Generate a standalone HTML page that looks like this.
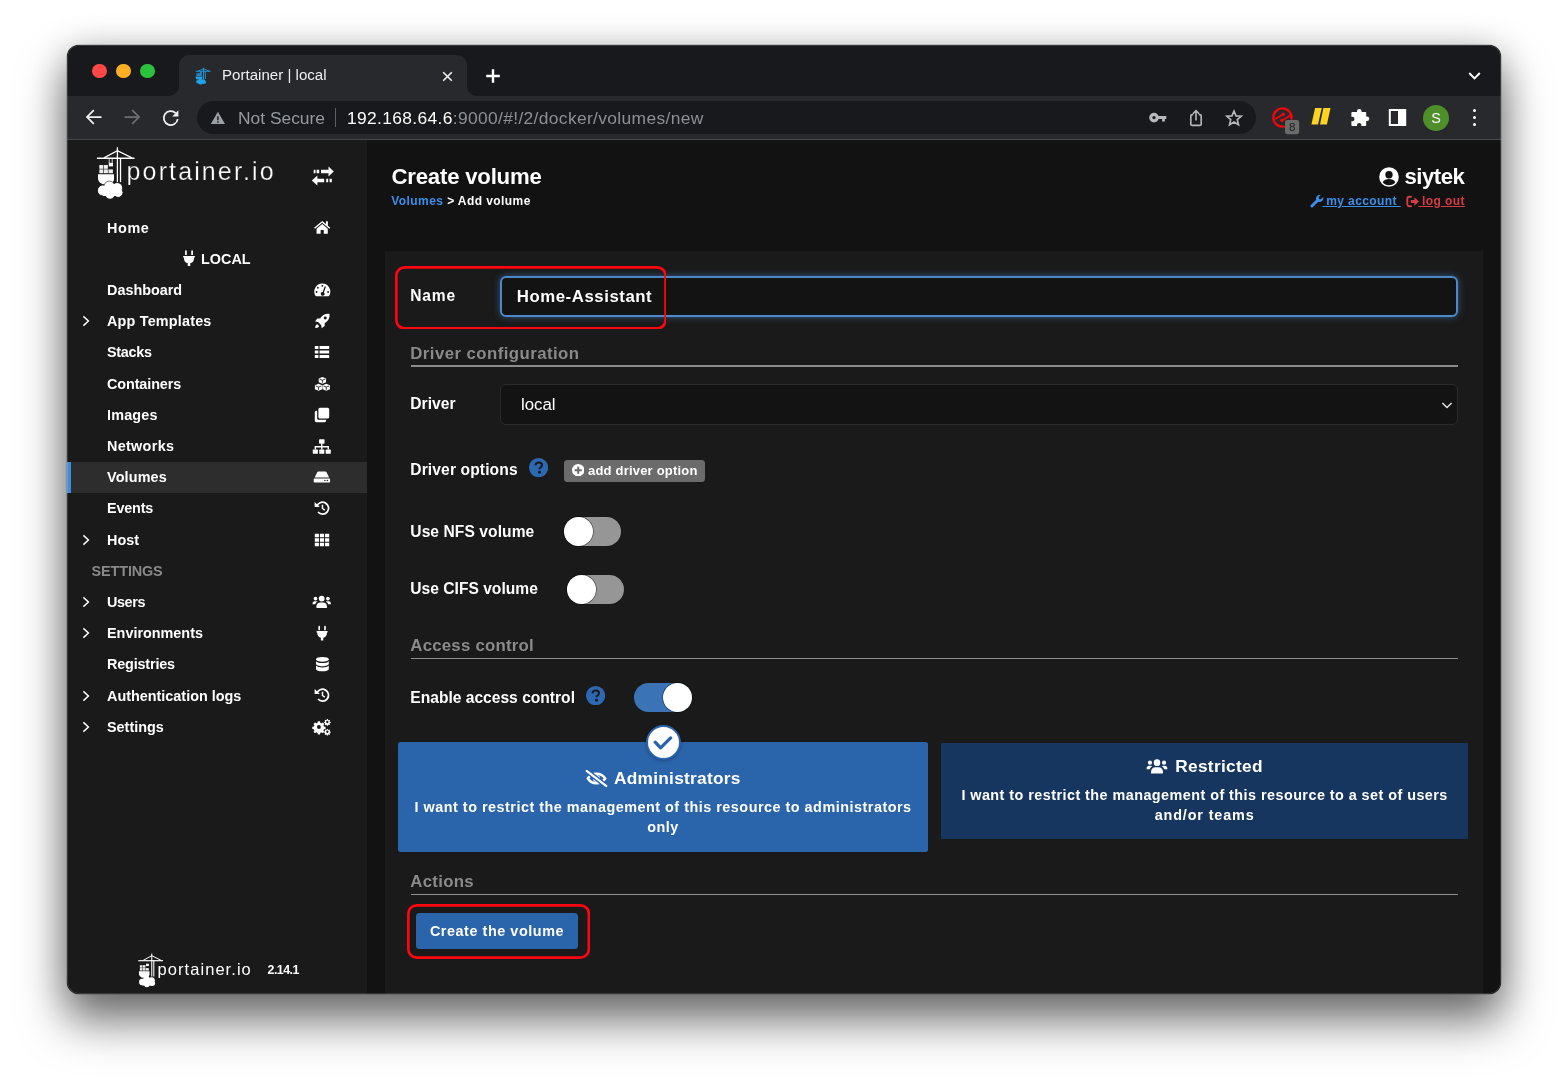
<!DOCTYPE html>
<html lang="en">
<head>
<meta charset="utf-8">
<title>Portainer | local</title>
<style>
html,body{margin:0;padding:0}
body{width:1568px;height:1082px;background:#fff;position:relative;overflow:hidden;font-family:"Liberation Sans",sans-serif;color:#fff}
#win{position:absolute;left:67px;top:45px;width:1434px;height:948.5px;border-radius:12px;background:#121212;overflow:hidden;
 box-shadow:0 0 0 .5px rgba(0,0,0,.3),0 26px 45px 2px rgba(0,0,0,.52),0 4px 36px rgba(0,0,0,.2)}
#win::after{content:"";position:absolute;left:0;top:0;right:0;bottom:0;border-radius:12px;border:1px solid rgba(255,255,255,.14);pointer-events:none}
#pg{position:absolute;left:-67px;top:-45px;width:1568px;height:1082px;will-change:transform}
#pg *{position:absolute;box-sizing:border-box;margin:0;padding:0;white-space:nowrap}
#pg svg *{position:static}
.t{font-weight:700;line-height:1;color:#fff}
/* chrome */
#tabstrip{left:67px;top:45px;width:1434px;height:51px;background:#18191c}
#tab{left:179px;top:55px;width:288px;height:41px;background:#28292d;border-radius:10px 10px 0 0}
#toolbar{left:67px;top:96px;width:1434px;height:44px;background:#28292d;border-bottom:1px solid #47484b}
#omni{left:197px;top:101px;width:1059px;height:33px;border-radius:17px;background:#18191c}
.sf{font-family:"Liberation Sans",sans-serif;font-weight:400;line-height:1}
/* page */
#sidebar{left:67px;top:140px;width:300px;height:854px;background:#1a1a1a}
#main{left:367px;top:140px;width:1134px;height:854px;background:#121212}
#widget{left:385px;top:251px;width:1098px;height:743px;background:#1a1a1a}
.nav{left:107px;font-size:14.4px;font-weight:700;line-height:1;color:#fff}
.sec{left:410.3px;font-size:16.8px;color:#8c8c8c;font-weight:700;line-height:1}
.hr{left:410.5px;width:1047.3px;height:1.4px;background:#8c8c8c}
.lbl{left:410.3px;font-size:15.6px;font-weight:700;line-height:1}
.tg{width:57.6px;height:28.8px;border-radius:15px;background:#969696}
.tg i{top:-.2px;left:0;width:29.2px;height:29.2px;border-radius:50%;background:#fff;box-shadow:0 0 0 .7px rgba(0,0,0,.5)}
.redbox{border:2.8px solid #fa0812;border-radius:10px}
</style>
</head>
<body>
<div id="win"><div id="pg">
<!-- CHROME -->
<div id="tabstrip"></div>
<div id="tab"></div>
<div id="toolbar"></div>
<div id="omni"></div>
<!--CHROME-START-->
<!-- traffic lights -->
<div style="left:92.400px;top:64.100px;width:14.400px;height:14.400px;border-radius:50%;background:#fd4848"></div>
<div style="left:116.300px;top:64.100px;width:14.400px;height:14.400px;border-radius:50%;background:#fbb024"></div>
<div style="left:140.200px;top:64.100px;width:14.400px;height:14.400px;border-radius:50%;background:#2bc23c"></div>
<!-- tab curves -->
<svg style="left:169px;top:86px" width="10" height="10" viewBox="0 0 10 10"><path d="M10 0V10H0A10 10 0 0 0 10 0Z" fill="#28292d"/></svg>
<svg style="left:467px;top:86px" width="10" height="10" viewBox="0 0 10 10"><path d="M0 0V10H10A10 10 0 0 1 0 0Z" fill="#28292d"/></svg>
<!-- favicon -->
<svg style="left:194.600px;top:66.600px" width="16" height="18" viewBox="95 145 42 56" preserveAspectRatio="none" fill="#1fa2e8" stroke="none">
 <g stroke="#1fa2e8" fill="none"><path d="M117.400 147.300V182.200M122 158V182.200" stroke-width="2.600"/><path d="M96.900 158.200H135.500" stroke-width="2.600"/><path d="M103 157.900L117.400 150.600L133 157.900" stroke-width="2.200"/></g>
 <rect x="107.500" y="160" width="5.500" height="6" opacity=".8"/><rect x="98.500" y="164.500" width="14.500" height="9" opacity=".75"/>
 <path d="M97 174.200H114.500V179c0 3-2.800 5.200-6 5.200h-5c-3.600 0-6.500-2.600-6.500-6z"/>
 <circle cx="103" cy="190.500" r="5.200"/><circle cx="109.400" cy="186.600" r="5.400"/><circle cx="117.200" cy="188" r="5.200"/><circle cx="119.200" cy="192.600" r="4.800"/><circle cx="110" cy="194.400" r="4.800"/><rect x="103" y="187" width="16" height="10"/>
</svg>
<div class="sf" style="left:222px;top:65.200px;font-size:15.100px;line-height:20px;color:#eceef0">Portainer | local</div>
<svg style="left:441px;top:69.5px" width="13" height="13" viewBox="0 0 13 13"><path d="M2.2 2.2L10.8 10.8M10.8 2.2L2.2 10.8" stroke="#f1f1f1" stroke-width="1.6" fill="none"/></svg>
<svg style="left:485px;top:68px" width="16" height="16" viewBox="0 0 16 16"><path d="M8 1.2V14.8M1.2 8H14.8" stroke="#fff" stroke-width="2.4" fill="none"/></svg>
<svg style="left:1467px;top:70px" width="15" height="12" viewBox="0 0 15 12"><path d="M2.2 3L7.5 8.4L12.8 3" stroke="#fff" stroke-width="2" fill="none"/></svg>
<!-- nav buttons -->
<svg style="left:84px;top:107px" width="20" height="20" viewBox="0 0 20 20"><path d="M17.5 10H3.2M9.8 3.2L3 10L9.8 16.8" stroke="#f1f1f1" stroke-width="1.750" fill="none"/></svg>
<svg style="left:121.5px;top:107px" width="20" height="20" viewBox="0 0 20 20"><path d="M2.5 10H16.8M10.2 3.2L17 10L10.2 16.8" stroke="#6c6e72" stroke-width="1.750" fill="none"/></svg>
<svg style="left:160.500px;top:108px" width="20" height="20" viewBox="0 0 20 20"><path d="M16.700 11A7 7 0 1 1 14.700 5.100" stroke="#f1f1f1" stroke-width="1.750" fill="none"/><path d="M17.400 2.200V8.400H11.200z" fill="#f1f1f1"/></svg>
<!-- omnibox content -->
<svg style="left:210.100px;top:110.600px" width="15.800" height="13.800" viewBox="0 0 17 15"><path d="M8.5 0.8L16.4 14.4H0.6z" fill="#9aa0a6"/><path d="M8.5 5.6V10M8.5 11.2V12.8" stroke="#18191c" stroke-width="1.6"/></svg>
<div class="sf" style="left:238px;top:106px;font-size:17.4px;line-height:24px;color:#959a9f">Not Secure</div>
<div style="left:335px;top:108px;width:1.2px;height:19px;background:#5c5f63"></div>
<div class="sf" style="left:347px;top:106px;font-size:17.4px;line-height:24px;color:#8c9095;letter-spacing:.35px"><span style="position:static;color:#fff">192.168.64.6</span>:9000/#!/2/docker/volumes/new</div>
<!-- key -->
<svg style="left:1147.800px;top:108px" width="20" height="20" viewBox="0 0 20 20"><circle cx="6" cy="9.600" r="3.250" fill="none" stroke="#b6b8bb" stroke-width="3.150"/><path d="M9.600 8.100H18.300V11.100H16.900V13.600H14.100V11.100H9.600z" fill="#b6b8bb"/></svg>
<!-- share -->
<svg style="left:1186px;top:105.800px" width="20" height="22" viewBox="0 0 20 22"><path d="M7.200 8.600H6.200a1.400 1.400 0 0 0-1.400 1.400v8a1.400 1.400 0 0 0 1.400 1.400h7.600a1.400 1.400 0 0 0 1.400-1.400v-8a1.400 1.400 0 0 0-1.400-1.400H12.800" stroke="#b6b8bb" stroke-width="1.600" fill="none"/><path d="M10 14.400V4.800M6.900 7.700L10 4.600L13.100 7.700" stroke="#b6b8bb" stroke-width="1.600" fill="none"/></svg>
<!-- star -->
<svg style="left:1225.100px;top:108.700px" width="18" height="18" viewBox="0 0 22 22"><path d="M11 2.6L13.5 8.4L19.8 8.9L15 13L16.5 19.2L11 15.9L5.5 19.2L7 13L2.2 8.9L8.5 8.4Z" stroke="#b6b8bb" stroke-width="2" fill="none" stroke-linejoin="miter"/></svg>
<!-- red ext -->
<svg style="left:1271px;top:105px" width="30" height="30" viewBox="0 0 30 30"><path d="M13.800 21.300A9.100 9.100 0 1 1 20.300 14.600" stroke="#f2050c" stroke-width="2.300" fill="none"/><path d="M4.400 14L12.200 9.300M10.900 15.500L19.800 10.200" stroke="#f2050c" stroke-width="1.700" fill="none"/><circle cx="12.200" cy="9.300" r="1.700" fill="#f2050c"/><circle cx="10.900" cy="15.500" r="1.700" fill="#f2050c"/><rect x="14" y="15" width="14.200" height="14.200" rx="2.400" fill="#6b6b6b"/><text x="21.100" y="26.300" text-anchor="middle" font-family="Liberation Sans, sans-serif" font-size="11.500" fill="#1c1c1c">8</text></svg>
<!-- yellow ext -->
<svg style="left:1310px;top:107px" width="22" height="18" viewBox="0 0 22 18"><path d="M5.100 .9H11.700L8 17.600H1.400zM13.400 .9H20.500L16.900 17.600H10z" fill="#fdd41f"/></svg>
<!-- puzzle -->
<svg style="left:1349px;top:107px" width="21" height="21" viewBox="0 0 21 21"><path d="M8 4.2a2.3 2.3 0 1 1 4.6 0v.8h3.6a1 1 0 0 1 1 1v3.4h.8a2.3 2.3 0 1 1 0 4.6h-.8v4a1 1 0 0 1-1 1h-3.8v-.9a2.2 2.2 0 1 0-4.4 0V19H3.4a1 1 0 0 1-1-1v-3.8h.9a2.2 2.2 0 1 0 0-4.4h-.9V6a1 1 0 0 1 1-1H8z" fill="#fff"/></svg>
<!-- side panel -->
<svg style="left:1388px;top:108px" width="19" height="19" viewBox="0 0 19 19"><rect x="1.8" y="2" width="15.4" height="15" fill="none" stroke="#fff" stroke-width="2"/><rect x="10" y="2" width="7.2" height="15" fill="#fff"/></svg>
<!-- avatar -->
<div style="left:1423px;top:104.5px;width:26px;height:26px;border-radius:50%;background:#4e8f2a"></div>
<div class="sf" style="left:1423px;top:104.5px;width:26px;text-align:center;font-size:14.4px;line-height:26.5px;color:#fff">S</div>
<!-- dots -->
<div style="left:1472.6px;top:108.6px;width:3.8px;height:3.8px;border-radius:50%;background:#fff"></div>
<div style="left:1472.6px;top:115.6px;width:3.8px;height:3.8px;border-radius:50%;background:#fff"></div>
<div style="left:1472.6px;top:122.6px;width:3.8px;height:3.8px;border-radius:50%;background:#fff"></div>
<!--CHROME-END-->
<!-- PAGE -->
<div id="sidebar"></div>
<div id="main"></div>
<div id="widget"></div>
<!--SIDEBAR-START-->
<!-- logo -->
<svg style="left:95px;top:145px" width="42" height="56" viewBox="95 145 42 56" fill="#fff" stroke="none">
 <g stroke="#fff" fill="none">
  <path d="M117.400 147.300V182.200" stroke-width="1.300"/><path d="M120.500 158V182.200" stroke-width="1.300"/>
  <path d="M96.900 158.200H134.500" stroke-width="1.500"/>
  <path d="M104 157.900L117.400 150.600L132 157.900" stroke-width="1.200"/>
  <path d="M109.200 158V163M112.200 158V163" stroke-width=".8"/>
 </g>
 <rect x="108.800" y="162.800" width="4.200" height="3.600"/>
 <g opacity=".92"><rect x="99.300" y="165" width="4" height="3.800"/><rect x="103.900" y="165" width="4" height="3.800"/>
 <rect x="99.300" y="169.400" width="4" height="3.800"/><rect x="103.900" y="169.400" width="4" height="3.800"/><rect x="108.500" y="169.400" width="4.400" height="3.800"/></g>
 <path d="M98 174.200H114V179c0 3-2.800 5.200-6 5.200h-3.500c-3.600 0-6.500-2.600-6.500-6z"/>
 <g stroke="#1a1a1a" stroke-width=".9"><circle cx="103" cy="190.500" r="5.300"/><circle cx="109.400" cy="186.600" r="5.400"/><circle cx="117.200" cy="188" r="5.200"/><circle cx="118.200" cy="192.600" r="4.600"/><circle cx="110" cy="194.400" r="4.600"/></g>
 <circle cx="103" cy="190.500" r="4.900"/><circle cx="109.400" cy="186.600" r="5"/><circle cx="117.200" cy="188" r="4.800"/><circle cx="118.200" cy="192.600" r="4.200"/><circle cx="110" cy="194.400" r="4.200"/><rect x="103" y="187" width="15" height="9"/>
</svg>
<div class="sf" style="left:126.600px;top:156.100px;font-size:25px;line-height:30px;color:#fff;letter-spacing:2.120px;-webkit-text-stroke:.25px #1a1a1a">portainer.io</div>
<!-- sidebar toggle -->
<svg style="left:311px;top:165px" width="24" height="22" viewBox="311 165 24 22" fill="#fff">
 <path d="M313.700 169.800h1.800v3.400h-1.800zM316.600 169.800h2.600v3.400h-2.600zM321 169.800h7.500v-3.400l5.300 5.100-5.300 5.100v-3.400H321z"/>
 <path d="M331.800 178.800h-2.200v3.400h2.200zM328.200 178.800h-2v3.400h2zM324.200 178.800h-6.800v-3.400l-5.600 5.100 5.600 5.100v-3.400h6.800z"/>
</svg>
<!-- footer logo -->
<svg style="left:137px;top:952.400px" width="27.700" height="36.900" viewBox="95 145 42 56" fill="#fff" stroke="none">
 <g stroke="#fff" fill="none">
  <path d="M117.400 147.300V182.200" stroke-width="1.600"/><path d="M120.500 158V182.200" stroke-width="1.600"/>
  <path d="M96.900 158.200H134.500" stroke-width="1.800"/>
  <path d="M104 157.900L117.400 150.600L132 157.900" stroke-width="1.500"/>
 </g>
 <rect x="108.800" y="162.800" width="4.200" height="3.600"/>
 <g opacity=".9"><rect x="99.300" y="165" width="4" height="3.800"/><rect x="103.900" y="165" width="4" height="3.800"/>
 <rect x="99.300" y="169.400" width="4" height="3.800"/><rect x="103.900" y="169.400" width="4" height="3.800"/><rect x="108.500" y="169.400" width="4.400" height="3.800"/></g>
 <path d="M98 174.200H114V179c0 3-2.800 5.200-6 5.200h-3.500c-3.600 0-6.500-2.600-6.500-6z"/>
 <circle cx="103" cy="190.500" r="4.900"/><circle cx="109.400" cy="186.600" r="5"/><circle cx="117.200" cy="188" r="4.800"/><circle cx="118.200" cy="192.600" r="4.200"/><circle cx="110" cy="194.400" r="4.200"/><rect x="103" y="187" width="15" height="9"/>
</svg>
<div class="sf" style="left:157.600px;top:958.900px;font-size:16.500px;line-height:20px;color:#fff;letter-spacing:1.050px">portainer.io</div>
<div class="t" style="left:267.600px;top:959.600px;font-size:12.400px;line-height:20px;letter-spacing:-.550px">2.14.1</div>
<div style="left:67px;top:461.600px;width:300px;height:31.200px;background:#2d2d2d"></div>
<div style="left:67px;top:461.600px;width:3.600px;height:31.200px;background:#3f8fe0"></div>
<div class="nav" style="top:217.5px;line-height:20px;letter-spacing:0.62px">Home</div>
<svg style="left:312.8px;top:218.3px" width="18.4" height="18.4" viewBox="0 0 20 20" fill="#fff"><path d="M10 3.2L1.2 10.6l1 1.2L10 5.3l7.8 6.5 1-1.2-2.6-2.2V3.6h-2.1v3zM10 6.6L3.9 11.7V17h4.4v-4h3.4v4h4.4v-5.3z"/></svg>
<div class="nav" style="top:280.0px;line-height:20px">Dashboard</div>
<svg style="left:312.7px;top:281.4px" width="18.6" height="18.6" viewBox="0 0 20 20" fill="#fff"><path d="M10 2.8a8.6 8.6 0 0 0-7.4 13c.2.3.5.5.9.5h13c.4 0 .7-.2.9-.5A8.6 8.6 0 0 0 10 2.8z"/><g fill="#1a1a1a"><circle cx="10" cy="5.2" r="1"/><circle cx="5.3" cy="7.3" r="1"/><circle cx="3.8" cy="11.8" r="1"/><circle cx="16.2" cy="11.8" r="1"/><path d="M12.6 5.6l1.3.5-2.2 6.2a2 2 0 1 1-1.3-.5z"/></g></svg>
<div class="nav" style="top:311.2px;line-height:20px;letter-spacing:0.19px">App Templates</div>
<svg style="left:81px;top:315.2px" width="10" height="12" viewBox="0 0 10 12"><path d="M2.400 1.400L7.400 6L2.400 10.600" fill="none" stroke="#fff" stroke-width="1.500"/></svg>
<svg style="left:312.9px;top:312.1px" width="18.3" height="18.3" viewBox="0 0 20 20" fill="#fff"><path d="M18 2c-4.400-.6-8 1.300-10.300 5.200H4.600L2.300 10.500l3.300.5 3.400 3.400.5 3.300 3.300-2.300v-3.100C16.700 10 18.600 6.400 18 2zM13.400 8.200a1.600 1.600 0 1 1 0-3.200 1.600 1.600 0 0 1 0 3.200zM2.600 17.400c-.300-1.900.400-3.500 2-4.100l2.100 2.100c-.6 1.600-2.200 2.300-4.100 2z"/></svg>
<div class="nav" style="top:342.4px;line-height:20px;letter-spacing:-0.29px">Stacks</div>
<svg style="left:313.0px;top:343.4px" width="18" height="18" viewBox="0 0 20 20" fill="#fff"><path d="M2 3.400h4v3.400H2zM7.300 3.400H18v3.400H7.300zM2 8.300h4v3.400H2zM7.300 8.300H18v3.400H7.300zM2 13.200h4v3.400H2zM7.300 13.200H18v3.400H7.300z"/></svg>
<div class="nav" style="top:373.6px;line-height:20px;letter-spacing:-0.1px">Containers</div>
<svg style="left:312.6px;top:374.7px" width="18.8" height="18.8" viewBox="0 0 20 20" fill="#fff"><path d="M10 2l3.900 1.600v4L10 9.300 6.100 7.600v-4zM5.900 9.400l3.900 1.600v4.100l-3.900 1.700L2 15.100V11zM14.100 9.400L18 11v4.100l-3.900 1.700-3.900-1.700V11z"/><g fill="none" stroke="#1a1a1a" stroke-width=".9"><path d="M7 4.300l3 1.200 3-1.200M10 5.500v2.800M2.900 11.700l3 1.200 3-1.200M5.900 12.900v2.900M11.100 11.700l3 1.200 3-1.200M14.100 12.900v2.900"/></g></svg>
<div class="nav" style="top:404.8px;line-height:20px;letter-spacing:0.17px">Images</div>
<svg style="left:313.0px;top:405.8px" width="18" height="18" viewBox="0 0 20 20" fill="#fff"><rect x="6" y="2" width="12" height="12" rx="1.800"/><path d="M4.600 5.400v8.200c0 1 .8 1.800 1.800 1.800h8.200v.8c0 1-.8 1.800-1.800 1.800H3.800c-1 0-1.800-.8-1.800-1.800V7.200c0-1 .8-1.800 1.800-1.800z"/></svg>
<div class="nav" style="top:436.0px;line-height:20px;letter-spacing:0.31px">Networks</div>
<svg style="left:312.2px;top:437.0px" width="19.6" height="19.6" viewBox="0 0 20 20" fill="#fff"><rect x="7.200" y="2.400" width="5.600" height="4.400" rx=".7"/><rect x=".8" y="12.800" width="5.200" height="4.400" rx=".7"/><rect x="7.400" y="12.800" width="5.200" height="4.400" rx=".7"/><rect x="14" y="12.800" width="5.200" height="4.400" rx=".7"/><path d="M9.300 6.800h1.400v2.400h6.600v3.600h-1.400v-2.200h-5.200v2.200H9.300v-2.200H4.100v2.200H2.700V9.200h6.600z"/></svg>
<div class="nav" style="top:467.2px;line-height:20px;letter-spacing:0.14px">Volumes</div>
<svg style="left:313.1px;top:468.3px" width="17.8" height="17.8" viewBox="0 0 20 20" fill="#fff"><path d="M4.900 4.600c.2-.5.700-.8 1.200-.8h7.800c.5 0 1 .3 1.200.8l3 6.200H1.900zM1.600 11.800h16.800c.5 0 .8.400.8.800v2.800c0 .5-.4.800-.8.800H1.600c-.5 0-.8-.4-.8-.8v-2.800c0-.5.400-.8.800-.8z"/><circle cx="13.400" cy="14" r=".9" fill="#2d2d2d"/><circle cx="16.200" cy="14" r=".9" fill="#2d2d2d"/></svg>
<div class="nav" style="top:498.4px;line-height:20px;letter-spacing:-0.17px">Events</div>
<svg style="left:312.8px;top:499.2px" width="18.4" height="18.4" viewBox="0 0 20 20" fill="#fff"><path d="M4.120 8.320A6.500 6.500 0 1 1 5.420 14.180" fill="none" stroke="#fff" stroke-width="1.900"/><path d="M1.800 3.200l5.600 5.400H1.800z"/><path d="M10.300 6.200v4.100l2.600 1.900" fill="none" stroke="#fff" stroke-width="1.600"/></svg>
<div class="nav" style="top:529.6px;line-height:20px">Host</div>
<svg style="left:81px;top:533.6px" width="10" height="12" viewBox="0 0 10 12"><path d="M2.400 1.400L7.400 6L2.400 10.600" fill="none" stroke="#fff" stroke-width="1.500"/></svg>
<svg style="left:313.0px;top:530.6px" width="18" height="18" viewBox="0 0 20 20" fill="#fff"><path d="M2 3h4.600v4H2zM7.700 3h4.600v4H7.700zM13.400 3H18v4h-4.600zM2 8h4.600v4H2zM7.700 8h4.600v4H7.700zM13.400 8H18v4h-4.600zM2 13h4.600v4H2zM7.700 13h4.600v4H7.700zM13.400 13H18v4h-4.600z"/></svg>
<div class="nav" style="top:592.0px;line-height:20px;letter-spacing:-0.4px">Users</div>
<svg style="left:81px;top:596.0px" width="10" height="12" viewBox="0 0 10 12"><path d="M2.400 1.400L7.400 6L2.400 10.600" fill="none" stroke="#fff" stroke-width="1.500"/></svg>
<svg style="left:312.3px;top:592.3px" width="19.4" height="19.4" viewBox="0 0 20 20" fill="#fff"><circle cx="10" cy="6.800" r="3"/><path d="M4.600 16.400v-1.700c0-2.200 1.700-3.900 3.900-3.900h3c2.200 0 3.900 1.700 3.900 3.900v1.700z"/><circle cx="3.600" cy="6.800" r="1.900"/><circle cx="16.400" cy="6.800" r="1.900"/><path d="M.6 12.600v-1c0-1.200 1-2.100 2.100-2.100h1.800c.5 0 .9.200 1.300.4-1.300.6-2.100 1.500-2.300 2.700zM19.400 12.600v-1c0-1.200-1-2.100-2.100-2.100h-1.800c-.5 0-.9.200-1.300.4 1.300.6 2.100 1.500 2.300 2.700z"/></svg>
<div class="nav" style="top:623.2px;line-height:20px">Environments</div>
<svg style="left:81px;top:627.2px" width="10" height="12" viewBox="0 0 10 12"><path d="M2.400 1.400L7.400 6L2.400 10.600" fill="none" stroke="#fff" stroke-width="1.500"/></svg>
<svg style="left:313.9px;top:625.1px" width="16.2" height="16.2" viewBox="0 0 20 20" fill="#fff"><path d="M6.400 .8c.6 0 1 .4 1 1v4.600H5.400V1.800c0-.6.400-1 1-1zM13.600 .8c.6 0 1 .4 1 1v4.600h-2V1.800c0-.6.400-1 1-1zM3.200 7.400h13.600v1.900h-.9v1.300c0 2.600-1.900 4.800-4.400 5.200v3.400h-3v-3.400c-2.500-.4-4.400-2.600-4.400-5.200V9.300h-.9z"/></svg>
<div class="nav" style="top:654.4px;line-height:20px;letter-spacing:-0.17px">Registries</div>
<svg style="left:312.6px;top:655.0px" width="18.8" height="18.8" viewBox="0 0 20 20" fill="#fff"><ellipse cx="10" cy="4.600" rx="6.800" ry="2.600"/><path d="M3.200 6.600c1 1.300 3.700 2 6.800 2s5.800-.7 6.800-2v2.800c0 1.400-3 2.600-6.800 2.600S3.200 10.800 3.200 9.400zM3.200 11.200c1 1.300 3.700 2 6.800 2s5.800-.7 6.800-2v3.600c0 1.400-3 2.600-6.800 2.600s-6.800-1.200-6.800-2.600z"/></svg>
<div class="nav" style="top:685.6px;line-height:20px">Authentication logs</div>
<svg style="left:81px;top:689.6px" width="10" height="12" viewBox="0 0 10 12"><path d="M2.400 1.400L7.400 6L2.400 10.600" fill="none" stroke="#fff" stroke-width="1.500"/></svg>
<svg style="left:312.8px;top:686.4px" width="18.4" height="18.4" viewBox="0 0 20 20" fill="#fff"><path d="M4.120 8.320A6.500 6.500 0 1 1 5.420 14.180" fill="none" stroke="#fff" stroke-width="1.900"/><path d="M1.800 3.200l5.600 5.400H1.800z"/><path d="M10.300 6.200v4.100l2.600 1.900" fill="none" stroke="#fff" stroke-width="1.600"/></svg>
<div class="nav" style="top:716.8px;line-height:20px">Settings</div>
<svg style="left:81px;top:720.8px" width="10" height="12" viewBox="0 0 10 12"><path d="M2.400 1.400L7.400 6L2.400 10.600" fill="none" stroke="#fff" stroke-width="1.500"/></svg>
<svg style="left:312.4px;top:717.2px" width="19.2" height="19.2" viewBox="0 0 20 20" fill="#fff"><g transform="translate(7.200 10.400)"><path d="M-1.100-6h2.200l.3 1.600 1.300.6 1.400-.9 1.500 1.500-.9 1.400.6 1.300 1.600.3v2.200l-1.600.3-.6 1.300.9 1.400-1.500 1.500-1.400-.9-1.300.6-.3 1.600h-2.200l-.3-1.600-1.300-.6-1.400.9-1.500-1.500.9-1.400-.6-1.300-1.600-.3v-2.200l1.600-.3.6-1.300-.9-1.400 1.500-1.500 1.400.9 1.300-.6z"/><circle r="2" fill="#1a1a1a"/></g><g transform="translate(16 5.200) scale(.5)"><path d="M-1.100-6h2.200l.3 1.600 1.300.6 1.400-.9 1.500 1.500-.9 1.400.6 1.300 1.600.3v2.200l-1.600.3-.6 1.300.9 1.400-1.500 1.500-1.400-.9-1.300.6-.3 1.600h-2.200l-.3-1.600-1.300-.6-1.400.9-1.500-1.500.9-1.400-.6-1.300-1.600-.3v-2.200l1.600-.3.6-1.300-.9-1.400 1.500-1.500 1.400.9 1.300-.6z"/><circle r="2.400" fill="#1a1a1a"/></g><g transform="translate(16 15.400) scale(.5)"><path d="M-1.100-6h2.200l.3 1.600 1.300.6 1.400-.9 1.500 1.500-.9 1.400.6 1.300 1.600.3v2.200l-1.600.3-.6 1.300.9 1.400-1.500 1.500-1.400-.9-1.300.6-.3 1.600h-2.200l-.3-1.600-1.300-.6-1.400.9-1.500-1.500.9-1.400-.6-1.300-1.600-.3v-2.200l1.600-.3.6-1.300-.9-1.400 1.500-1.500 1.400.9 1.300-.6z"/><circle r="2.400" fill="#1a1a1a"/></g></svg>
<svg style="left:183.400px;top:250.300px" width="12" height="16.600" viewBox="3 .5 14 19.400" fill="#fff"><path d="M6.400 .8c.6 0 1 .4 1 1v4.600H5.400V1.800c0-.6.400-1 1-1zM13.600 .8c.6 0 1 .4 1 1v4.600h-2V1.800c0-.6.400-1 1-1zM3.200 7.400h13.600v1.900h-.9v1.300c0 2.600-1.900 4.800-4.400 5.200v3.400h-3v-3.400c-2.500-.4-4.400-2.600-4.400-5.200V9.300h-.9z"/></svg>
<div class="nav" style="left:201px;top:248.800px;line-height:20px">LOCAL</div>
<div class="nav" style="left:91.600px;top:560.800px;line-height:20px;color:#898989;font-weight:700;letter-spacing:-.12px">SETTINGS</div>
<!--SIDEBAR-END-->
<!--MAIN-START-->
<!-- header -->
<div class="t" style="left:391.500px;top:164.300px;font-size:22.200px;line-height:26px;letter-spacing:-.22px">Create volume</div>
<div class="t" style="left:391.300px;top:192.800px;font-size:12px;line-height:16px;letter-spacing:.42px"><span style="position:static;color:#3b8eea">Volumes</span> &gt; Add volume</div>
<svg style="left:1378.900px;top:166.600px" width="20" height="20" viewBox="0 0 20 20"><circle cx="10" cy="10" r="9.800" fill="#fff"/><circle cx="10" cy="7.800" r="3.700" fill="#121212"/><path d="M3.600 15.200c1.300-2.200 3.600-3.200 6.400-3.200s5.100 1 6.400 3.200c-1.500 1.900-3.800 3-6.400 3s-4.900-1.100-6.400-3z" fill="#121212"/></svg>
<div class="t" style="left:1404.500px;top:163.700px;font-size:22.200px;line-height:26px;letter-spacing:-.5px">siytek</div>
<!-- my account / log out -->
<svg style="left:1309.700px;top:194px" width="14" height="14" viewBox="0 0 14 14"><path d="M13.200 3.100l-2.200 2.200-1.900-.4-.4-1.900L10.900.8a3.900 3.900 0 0 0-4.700 5L.9 11.100a1.400 1.400 0 1 0 2 2l5.300-5.300a3.900 3.900 0 0 0 5-4.700z" fill="#3b8eea"/></svg>
<div class="t" style="left:1322.500px;top:192.800px;font-size:12px;line-height:16px;letter-spacing:.4px;color:#3b8eea;text-decoration:underline;white-space:pre"> my account </div>
<svg style="left:1406px;top:194.500px" width="14" height="13" viewBox="0 0 14 13"><path d="M5 1.800H3.200A1.900 1.900 0 0 0 1.300 3.700v5.600a1.900 1.900 0 0 0 1.900 1.900H5" fill="none" stroke="#d63c43" stroke-width="1.900" stroke-linecap="round"/><path d="M4.800 4.900h3.600V2.200l4.600 4.300-4.600 4.300V8.100H4.800z" fill="#d63c43"/></svg>
<div class="t" style="left:1418.300px;top:192.800px;font-size:12px;line-height:16px;letter-spacing:.4px;color:#d63c43;text-decoration:underline;white-space:pre"> log out</div>
<!-- name row -->
<div class="lbl" style="top:286.400px;line-height:20px;letter-spacing:.8px">Name</div>
<div style="left:500px;top:275.900px;width:958px;height:41.400px;border-radius:6px;background:#131313;border:2px solid #4b89c9;box-shadow:0 0 7px rgba(80,150,230,.5)"></div>
<div class="t" style="left:516.800px;top:287px;font-size:16.800px;line-height:20px;letter-spacing:.55px">Home-Assistant</div>
<svg style="left:394.6px;top:265.5px" width="271.9" height="63.8" viewBox="0 0 271.9 63.8"><rect x="1.350" y="1.350" width="269.200" height="61.100" rx="8.400" fill="none" stroke="#fb0611" stroke-width="2.700"/></svg>
<!-- driver config -->
<div class="sec t" style="top:343.900px;line-height:20px;letter-spacing:.44px;color:#8a8a8a">Driver configuration</div>
<div class="hr" style="top:365.200px"></div>
<div class="lbl" style="top:394.400px;line-height:20px;letter-spacing:.05px">Driver</div>
<div style="left:500px;top:384.400px;width:958px;height:40.400px;border-radius:6px;background:#131313;border:1.200px solid #2b2b2b"></div>
<div class="sf" style="left:521px;top:395.300px;font-size:16.800px;line-height:20px;color:#fff">local</div>
<svg style="left:1440px;top:400px" width="14" height="11" viewBox="0 0 14 11"><path d="M2.400 3L7 7.600L11.600 3" fill="none" stroke="#e6e6e6" stroke-width="1.400"/></svg>
<!-- driver options -->
<div class="lbl" style="top:459.900px;line-height:20px;letter-spacing:.12px">Driver options</div>
<svg style="left:528.600px;top:457.600px" width="19.200" height="19.200" viewBox="0 0 20 20"><circle cx="10" cy="10" r="10" fill="#2d68b2"/><path d="M6.700 7.700c.2-2 1.500-3.100 3.500-3.100 2 0 3.400 1.100 3.400 2.800 0 1.300-.7 2-1.700 2.700-.8.500-1 .9-1 1.700" fill="none" stroke="#1a1a1a" stroke-width="2.100"/><circle cx="10.900" cy="14.900" r="1.500" fill="#1a1a1a"/></svg>
<div style="left:564.200px;top:460px;width:141.300px;height:21.600px;border-radius:3.500px;background:#6b6b6b"></div>
<svg style="left:571.800px;top:463.800px" width="12.400" height="12.400" viewBox="0 0 12 12"><circle cx="6" cy="6" r="6" fill="#fff"/><path d="M6 2.600V9.400M2.600 6H9.400" stroke="#6b6b6b" stroke-width="1.900"/></svg>
<div class="t" style="left:588px;top:460.800px;font-size:13px;line-height:20px;letter-spacing:.2px">add driver option</div>
<!-- toggles -->
<div class="lbl" style="top:521.700px;line-height:20px;letter-spacing:.07px">Use NFS volume</div>
<div class="tg" style="left:563.800px;top:517px"><i></i></div>
<div class="lbl" style="top:579.100px;line-height:20px;letter-spacing:.01px">Use CIFS volume</div>
<div class="tg" style="left:566.800px;top:575px"><i></i></div>
<!-- access control -->
<div class="sec t" style="top:636.200px;line-height:20px;letter-spacing:.24px;color:#8a8a8a">Access control</div>
<div class="hr" style="top:658.100px"></div>
<div class="lbl" style="top:687.700px;line-height:20px;letter-spacing:0px">Enable access control</div>
<svg style="left:586.200px;top:685.600px" width="19.200" height="19.200" viewBox="0 0 20 20"><circle cx="10" cy="10" r="10" fill="#2d68b2"/><path d="M6.700 7.700c.2-2 1.500-3.100 3.500-3.100 2 0 3.400 1.100 3.400 2.800 0 1.300-.7 2-1.700 2.700-.8.500-1 .9-1 1.700" fill="none" stroke="#1a1a1a" stroke-width="2.100"/><circle cx="10.900" cy="14.900" r="1.500" fill="#1a1a1a"/></svg>
<div class="tg" style="left:634px;top:683px;background:#3b74b6"><i style="left:28.800px"></i></div>
<!-- boxes -->
<div style="left:398.200px;top:741.800px;width:529.800px;height:109.800px;border-radius:2.500px;background:#2a64aa"></div>
<div style="left:940.800px;top:742.800px;width:527.600px;height:95.800px;border-radius:1px;background:#17365f"></div>
<div style="left:645.500px;top:724.700px;width:35.800px;height:35.800px;border-radius:50%;background:#fff;border:2.600px solid #2a64aa;box-shadow:0 1px 3px rgba(0,0,0,.25)"></div>
<svg style="left:653px;top:734px" width="20" height="18" viewBox="0 0 20 18"><path d="M2.200 8.200L7.600 13.800L17.600 3.900" fill="none" stroke="#2a64aa" stroke-width="3.300" stroke-linecap="round" stroke-linejoin="round"/></svg>
<!-- admin title -->
<svg style="left:584.600px;top:768.800px" width="23" height="19" viewBox="0 0 23 19"><path d="M2.800 9.500C4.800 6.500 7.800 4.800 11.500 4.800s6.700 1.700 8.700 4.700c-2 3-5 4.700-8.700 4.700S4.800 12.500 2.800 9.500z" fill="none" stroke="#fff" stroke-width="2.400"/><circle cx="11.500" cy="9.500" r="2.500" fill="none" stroke="#fff" stroke-width="2.100"/><path d="M1.600 1.800L21.400 17.200" stroke="#2a64aa" stroke-width="5"/><path d="M1.600 1.800L21.400 17.200" stroke="#fff" stroke-width="2.100" stroke-linecap="round"/></svg>
<div class="t" style="left:614px;top:768.200px;font-size:17.300px;line-height:20px;letter-spacing:.27px">Administrators</div>
<div class="t" style="left:398.200px;top:796.800px;width:529.800px;text-align:center;font-size:14.400px;line-height:20px;letter-spacing:.5px">I want to restrict the management of this resource to administrators</div>
<div class="t" style="left:398.200px;top:817.200px;width:529.800px;text-align:center;font-size:14.400px;line-height:20px;letter-spacing:.5px">only</div>
<!-- restricted title -->
<svg style="left:1146px;top:754.600px" width="22" height="22.500" viewBox="0 0 20 20" fill="#fff" preserveAspectRatio="none"><circle cx="10" cy="6.800" r="3"/><path d="M4.600 16.400v-1.700c0-2.200 1.700-3.900 3.900-3.900h3c2.200 0 3.900 1.700 3.900 3.900v1.700z"/><circle cx="3.600" cy="6.800" r="1.900"/><circle cx="16.400" cy="6.800" r="1.900"/><path d="M.6 12.600v-1c0-1.200 1-2.100 2.100-2.100h1.800c.5 0 .9.200 1.300.4-1.300.6-2.100 1.500-2.300 2.700zM19.400 12.600v-1c0-1.200-1-2.100-2.100-2.100h-1.800c-.5 0-.9.200-1.300.4 1.300.6 2.100 1.500 2.300 2.700z"/></svg>
<div class="t" style="left:1175.200px;top:756.400px;font-size:17.300px;line-height:20px;letter-spacing:.31px">Restricted</div>
<div class="t" style="left:940.800px;top:785px;width:527.600px;text-align:center;font-size:14.400px;line-height:20px;letter-spacing:.45px">I want to restrict the management of this resource to a set of users</div>
<div class="t" style="left:940.800px;top:805.400px;width:527.600px;text-align:center;font-size:14.400px;line-height:20px;letter-spacing:.86px">and/or teams</div>
<!-- actions -->
<div class="sec t" style="top:871.600px;line-height:20px;letter-spacing:.3px;color:#8a8a8a">Actions</div>
<div class="hr" style="top:893.600px"></div>
<div style="left:416.200px;top:913px;width:161.600px;height:35.800px;border-radius:3.500px;background:#2a64aa"></div>
<div class="t" style="left:416.200px;top:920.600px;width:161.600px;text-align:center;font-size:14.400px;line-height:20px;letter-spacing:.55px">Create the volume</div>
<svg style="left:406.7px;top:904.1px" width="183.2" height="54.9" viewBox="0 0 183.2 54.9"><rect x="1.350" y="1.350" width="180.500" height="52.200" rx="8.400" fill="none" stroke="#fb0611" stroke-width="2.700"/></svg>
<!--MAIN-END-->
</div></div>
</body>
</html>
